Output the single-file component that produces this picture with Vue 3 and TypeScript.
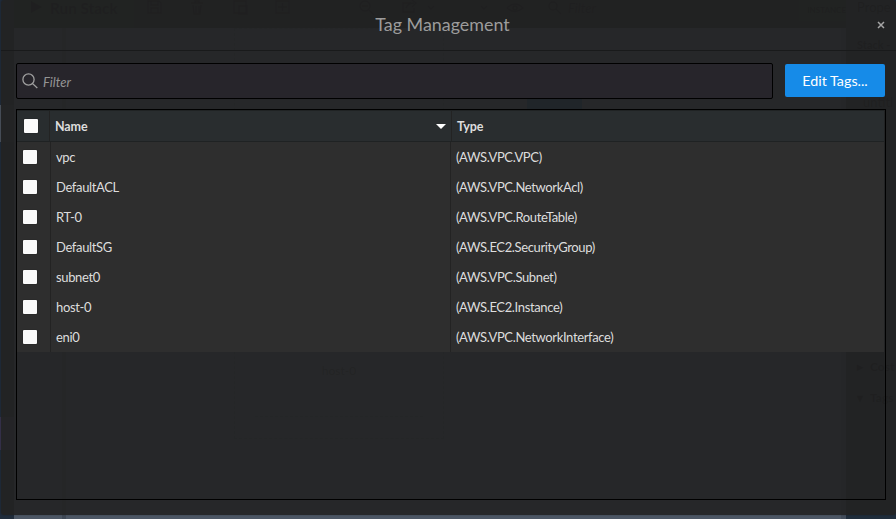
<script setup lang="ts">
interface Resource {
  name: string
  type: string
}

const resources: Resource[] = [
  { name: 'vpc', type: '(AWS.VPC.VPC)' },
  { name: 'DefaultACL', type: '(AWS.VPC.NetworkAcl)' },
  { name: 'RT-0', type: '(AWS.VPC.RouteTable)' },
  { name: 'DefaultSG', type: '(AWS.EC2.SecurityGroup)' },
  { name: 'subnet0', type: '(AWS.VPC.Subnet)' },
  { name: 'host-0', type: '(AWS.EC2.Instance)' },
  { name: 'eni0', type: '(AWS.VPC.NetworkInterface)' },
]
</script>

<template>
  <div class="app">
    <!-- Dimmed editor behind the dialog -->
    <div class="editor" aria-hidden="true">
      <div class="rail">
        <span class="rail-item"></span>
        <span class="rail-item purple"></span>
      </div>
      <div class="work">
        <div class="toolbar">
          <span class="run">
            <svg width="12" height="14" viewBox="0 0 12 14"><path d="M0 1l11 6-11 6z" fill="currentColor" /></svg>
            Run Stack
          </span>
          <svg class="tools" width="434" height="28" viewBox="0 0 434 28" fill="none" stroke="currentColor" stroke-width="1.3">
            <path d="M14 1h11l2 2v10H14zM17 1v4h7V1M17 13V8h7v5" />
            <path d="M57 3h12M59 5l1 9h6l1-9M62 6v7M65 6v7M61 3V1h4v2" />
            <path d="M100 1h12v12h-12zM105 6h8v8h-8z" />
            <path d="M142 1h13v12h-13zM148.500 3v8M144 7h9" />
            <circle cx="231" cy="6" r="5" /><path d="M228 6h6M235 10l5 5" />
            <path d="M277 3h-8v9h11V8M272 8q2-5 8-5M278 0l4 3-4 4" />
            <path d="M294 6l3 3 3-3M347 6l3 3 3-3" />
            <path d="M373 8q8-8 16 0q-8 7-16 0" /><circle cx="381" cy="8" r="2" />
            <circle cx="419" cy="6" r="4" /><path d="M422 9l5 5" />
          </svg>
          <span class="search">Filter</span>
          <span class="instance">INSTANCE</span>
        </div>
        <div class="canvas">
          <div class="subnet"><div class="host">host-0</div></div>
          <div class="node"></div>
        </div>
      </div>
      <div class="properties">
        <div class="prop-title">Prope</div>
        <div class="prop-stack">Stack -</div>
        <div class="prop-name">untitl</div>
        <div class="prop-line"><span>▸</span>Cost</div>
        <div class="prop-line"><span>▾</span>Tags</div>
        <div class="prop-body"></div>
      </div>
    </div>

    <section class="dialog" role="dialog">
      <header class="title-bar">
        <h1>Tag Management</h1>
        <button class="close" type="button" aria-label="Close">
          <svg width="8" height="8" viewBox="0 0 8 8"><path d="M1 1l6 6M7 1L1 7" stroke="currentColor" stroke-width="1.500" /></svg>
        </button>
      </header>

      <div class="controls">
        <label class="filter">
          <svg width="16" height="16" viewBox="0 0 16 16" fill="none" stroke="currentColor" stroke-width="1.300">
            <circle cx="6.500" cy="6.500" r="5.600" />
            <path d="M10.600 10.600L15.300 15" />
          </svg>
          <input type="text" placeholder="Filter" />
        </label>
        <button class="edit" type="button">Edit Tags...</button>
      </div>

      <div class="table">
        <div class="row head">
          <div class="cell check"><span class="box"></span></div>
          <div class="cell name">
            <span>Name</span>
            <svg width="10" height="5" viewBox="0 0 10 5"><path d="M0 0h10L5 5z" fill="#fff" /></svg>
          </div>
          <div class="cell type">Type</div>
        </div>
        <div v-for="item in resources" :key="item.name" class="row">
          <div class="cell check"><span class="box"></span></div>
          <div class="cell name">{{ item.name }}</div>
          <div class="cell type">{{ item.type }}</div>
        </div>
      </div>
    </section>
  </div>
</template>

<style>
body {
  overflow: hidden;
  background: #202d3b;
}
</style>

<style scoped>
* {
  box-sizing: border-box;
}
.app {
  display: grid;
  height: 519px;
  font-family: Lato, sans-serif;
}
.editor,
.dialog {
  grid-area: 1 / 1;
}
.editor {
  display: grid;
  grid-template-columns: 14px 1fr 50px;
  height: 519px;
  overflow: hidden;
  color: #05080c;
}
.rail {
  display: flex;
  flex-direction: column;
  gap: 275px;
  padding-top: 105px;
  background: #202c3b;
}
.rail-item {
  height: 37px;
  background: linear-gradient(90deg, #4b535e 1px, #2b333d 1px);
}
.rail-item.purple {
  height: 33px;
  background: #38334f;
}
.work {
  display: grid;
  grid-template-rows: 28px 1fr;
  min-width: 0;
}
.toolbar {
  display: flex;
  overflow: hidden;
  background: #1c2027;
  line-height: 16px;
}
.run {
  display: flex;
  flex: 0 0 120px;
  gap: 7px;
  padding-left: 17px;
  background: #163020;
  font-size: 15.3px;
  font-weight: 700;
  white-space: nowrap;
}
.tools {
  flex: none;
}
.search {
  flex: 1;
  font-size: 13px;
  font-style: italic;
}
.instance {
  height: 21px;
  padding: 2px 0 0 8px;
  background: #163020;
  font-size: 8px;
  font-weight: 700;
}
.canvas {
  display: grid;
  grid-template-columns: 220px 210px 1fr;
  background: linear-gradient(90deg, transparent 48px, #3f4956 48px 52px, transparent 52px 827px, #434d5b 827px), #4d5765;
  background-size: 100% 100%;
}
.subnet {
  grid-column: 2;
  height: 411px;
  padding: 310px 20px 20px;
  border: 1px dashed #3b4652;
}
.host {
  height: 78px;
  padding-top: 24px;
  border-bottom: 1px dashed #3b4652;
  color: #2a323c;
  font-size: 12px;
  text-align: center;
}
.node {
  width: 55px;
  height: 11px;
  margin: 71px 0 0 83px;
  background: #0e3f6c;
}
.properties {
  padding-left: 11px;
  background: #202d3b;
  font-size: 14px;
  white-space: nowrap;
}
.prop-title {
  height: 36px;
  font-size: 13px;
  line-height: 14px;
}
.prop-stack {
  height: 58px;
  font-size: 11px;
  font-weight: 700;
  line-height: 18px;
}
.prop-name {
  height: 258px;
  padding-left: 6px;
  font-size: 13px;
}
.prop-line {
  display: flex;
  height: 31px;
  font-size: 12px;
  font-weight: 700;
  line-height: 29px;
}
.prop-line span {
  width: 13px;
}
.prop-body {
  height: 62px;
  margin-left: -11px;
  background: #202b32;
}
.dialog {
  z-index: 1;
  height: 515px;
  margin-left: 1px;
  border-radius: 3px;
  background: rgba(34, 34, 34, 0.9);
  box-shadow: 0 0 2px rgba(0, 0, 0, 0.3);
}
.title-bar {
  display: grid;
  grid-template-columns: 30px 1fr 30px;
  height: 51px;
  border-bottom: 1px solid #191a1b;
}
h1 {
  grid-column: 2;
  margin: 0;
  padding-right: 12px;
  color: #9c9c9c;
  font-size: 17.9px;
  font-weight: 400;
  line-height: 49px;
  text-align: center;
}
button {
  padding: 0;
  border: 0;
  font-family: inherit;
}
.close {
  display: flex;
  align-items: center;
  justify-content: center;
  background: none;
  color: #a5a5a5;
}
.controls {
  display: flex;
  gap: 12px;
  padding: 12px 11px 10px 15px;
}
.filter {
  display: flex;
  flex: 1;
  align-items: center;
  height: 36px;
  padding-left: 5px;
  border: 1px solid #000;
  border-radius: 2px;
  background: #27252b;
  color: #a0a0a0;
}
input {
  flex: 1;
  padding: 2px 0 0 5px;
  border: 0;
  outline: 0;
  background: none;
  color: #ddd;
  font: italic 13px Lato, sans-serif;
}
input::placeholder {
  color: #949494;
}
.edit {
  width: 100px;
  height: 33px;
  margin-top: 1px;
  border-radius: 2px;
  background: #168be8;
  color: #fff;
  font-size: 14.3px;
}
.table {
  height: 391px;
  margin: 0 10px 0 15px;
  padding-right: 1px;
  border: 1px solid #000;
}
.row {
  display: grid;
  grid-template-columns: 34px 400px 1fr;
  height: 30px;
  background: #2e2e2e;
  color: #ddd;
  font-size: 13px;
  letter-spacing: -0.36px;
}
.row.head {
  grid-template-columns: 33px 402px 1fr;
  height: 32px;
  border-top: 1px solid #202324;
  border-bottom: 1px solid #1f2223;
  background: #292d2f;
  font-size: 12.5px;
  font-weight: 700;
  letter-spacing: -0.1px;
}
.cell {
  display: flex;
  align-items: center;
  padding: 0 5px;
  border-right: 1px solid #232323;
}
.cell.type {
  border-right: 0;
}
.head .name {
  justify-content: space-between;
  padding: 0 5px;
}
.check {
  padding-left: 6px;
}
.head .check {
  padding-left: 7px;
}
.box {
  width: 14px;
  height: 14px;
  border-radius: 1px;
  background: #fbfbfb;
  box-shadow: 0 0 1px #111;
}
</style>
